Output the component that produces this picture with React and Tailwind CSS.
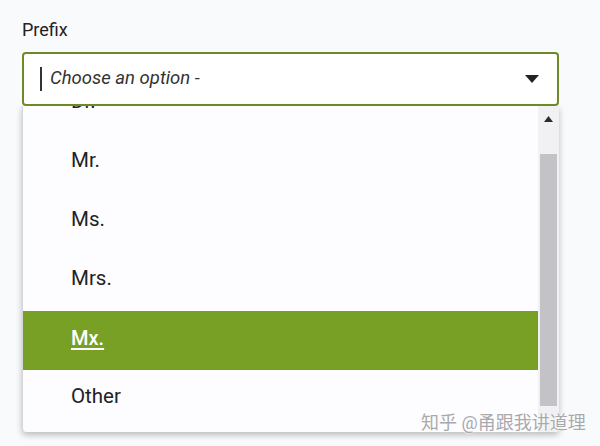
import React from "react";

const options = ["Dr.", "Mr.", "Ms.", "Mrs.", "Mx.", "Other"];

const App = () => {
  return (
    <div
      className="relative w-[600px] h-[446px] overflow-hidden bg-[#f9fafc] text-[#212121]"
      style={{ fontFamily: "Roboto, 'Noto Sans CJK SC', sans-serif" }}
    >
      <div className="pl-[22px] pt-[19px] text-[18px] leading-[22px] text-[#222]">Prefix</div>

      <div className="relative ml-[22px] mt-[11px] w-[537px]">
        {/* select box */}
        <div className="relative z-10 flex h-[54px] items-center rounded-[4px] border-2 border-[#6d8a26] bg-white pl-[16px] pr-[16px]">
          <span className="mr-[8px] h-[24px] w-[2px] bg-[#333]" />
          <span className="text-[18.5px] italic text-[#333]">Choose an option -</span>
          <svg className="ml-auto mr-[2px]" width="14" height="8" viewBox="0 0 14 8">
            <path d="M0 0 L14 0 L7 8 Z" fill="#222" />
          </svg>
        </div>

        {/* open listbox */}
        <div className="flex h-[326px] overflow-hidden rounded-b-[4px] border-l border-[#d5d6da] bg-[#fdfdff] shadow-[0_3px_6px_rgba(0,0,0,0.25)]">
          <div className="flex-1 overflow-hidden">
            <div className="-mt-[31px]">
              {options.map((o) =>
                o === "Mx." ? (
                  <div key={o} className="flex h-[59px] items-center bg-[#78a024] pb-[6px] pl-[48px] text-[20px] font-medium text-white underline decoration-2 underline-offset-[3px]">
                    {o}
                  </div>
                ) : (
                  <div key={o} className="flex h-[59px] items-center pb-[6px] pl-[48px] text-[20.5px] text-[#222]">
                    {o}
                  </div>
                )
              )}
            </div>
          </div>
          {/* scrollbar */}
          <div className="flex w-[21px] flex-col bg-[#f1f1f3]">
            <div className="flex h-[26px] items-center justify-center">
              <svg width="9" height="6" viewBox="0 0 9 6">
                <path d="M0 6 L9 6 L4.5 0 Z" fill="#2a2a38" />
              </svg>
            </div>
            <div className="mx-[2px] mt-[22px] h-[252px] bg-[#c2c2c7]" />
          </div>
        </div>
      </div>

      {/* watermark */}
      <div
        className="absolute left-[421px] top-[409px] text-[18px] text-[#a9a9ad]"
        style={{ textShadow: "0 0 2px #fff, 0 0 2px #fff" }}
      >
        知乎 @甬跟我讲道理
      </div>
    </div>
  );
};

export default App;
